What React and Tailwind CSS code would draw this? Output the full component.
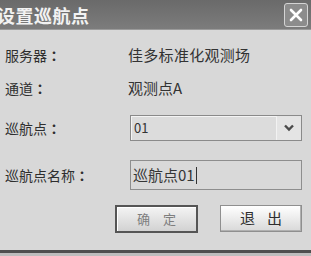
import React from 'react';

const ChevronDown = () => (
  <svg width="12" height="8" viewBox="0 0 12 8">
    <path d="M2 1.5 L6 5.5 L10 1.5" fill="none" stroke="#4a4a4a" strokeWidth="2.4" />
  </svg>
);

const CloseIcon = () => (
  <svg width="14" height="14" viewBox="0 0 14 14">
    <path d="M2 2 L12 12 M12 2 L2 12" stroke="#ffffff" strokeWidth="2.6" strokeLinecap="round" />
  </svg>
);

// 标签：冒号用繁体字形，居中显示
const Label = ({ text, w }) => (
  <span className={`${w} text-[14px] text-[#2e2e2e]`}>
    {text}
    <span className="font-['Noto_Sans_CJK_TC',sans-serif] font-bold">：</span>
  </span>
);

const App = () => {
  return (
    <div className="w-[311px] h-[256px] overflow-hidden bg-[#bdbdbd] font-['Noto_Sans_CJK_SC',sans-serif]">
      <div className="flex flex-col h-[253px] bg-[#d8d8d8] border-b-[3px] border-[#4f4f4f]">
        {/* 标题栏 */}
        <div className="h-[30px] flex items-center justify-between bg-gradient-to-b from-[#6a6a6a] to-[#7c7c7c] border-b border-[#9a9a9a]">
          <span className="ml-[-3px] text-[18px] leading-none font-bold text-[#f2f2f2] tracking-[0.5px]">设置巡航点</span>
          <button className="mr-[3px] w-[24px] h-[24px] flex items-center justify-center rounded-[3px] border border-[#d4d4d4] bg-[#8c8c8c]">
            <CloseIcon />
          </button>
        </div>

        {/* 表单 */}
        <div className="flex flex-col pl-[5px] pr-[9px] text-[#333]">
          <div className="mt-[13px] h-[24px] flex items-center">
            <Label text="服务器" w="w-[123px]" />
            <span className="text-[15px] tracking-[0.3px]">佳多标准化观测场</span>
          </div>
          <div className="mt-[9px] h-[24px] flex items-center">
            <Label text="通道" w="w-[123px]" />
            <span className="text-[15px]">观测点A</span>
          </div>
          <div className="mt-[15px] h-[26px] flex items-center">
            <Label text="巡航点" w="w-[125px]" />
            <div className="flex-1 h-full flex border border-[#8a8a8a] bg-[#dcdcdc] shadow-[inset_1px_1px_0_#f4f4f4]">
              <span className="flex-1 flex items-center pl-[3px] text-[13px] text-[#333]">01</span>
              <div className="w-[25px] flex items-center justify-center border-l border-[#f2f2f2] bg-[#e4e4e4]">
                <ChevronDown />
              </div>
            </div>
          </div>
          <div className="mt-[19px] h-[30px] flex items-center">
            <Label text="巡航点名称" w="w-[125px]" />
            <div className="flex-1 h-full flex items-center pl-[2px] border border-[#8e8e8e] bg-[#d9d9d9]">
              <span className="text-[15px] text-[#353535]">巡航点01</span>
              <span className="ml-[1px] w-[1px] h-[17px] bg-[#333]" />
            </div>
          </div>
          <div className="mt-[15px] flex justify-end gap-[22px]">
            <button className="w-[83px] h-[28px] flex items-center justify-center gap-[13px] border-2 border-[#555] bg-gradient-to-b from-[#f4f4f4] to-[#d2d2d2] shadow-[inset_1px_1px_0_#ffffff] text-[13px] text-[#7e7e7e]">
              <span>确</span>
              <span>定</span>
            </button>
            <button className="w-[82px] h-[27px] flex items-center justify-center gap-[12px] border border-[#8f8f8f] bg-gradient-to-b from-[#ffffff] to-[#d9d9d9] shadow-[inset_-1px_-1px_0_#b0b0b0] text-[15px] text-[#2e2e2e]">
              <span>退</span>
              <span>出</span>
            </button>
          </div>
        </div>
      </div>
    </div>
  );
};

export default App;
